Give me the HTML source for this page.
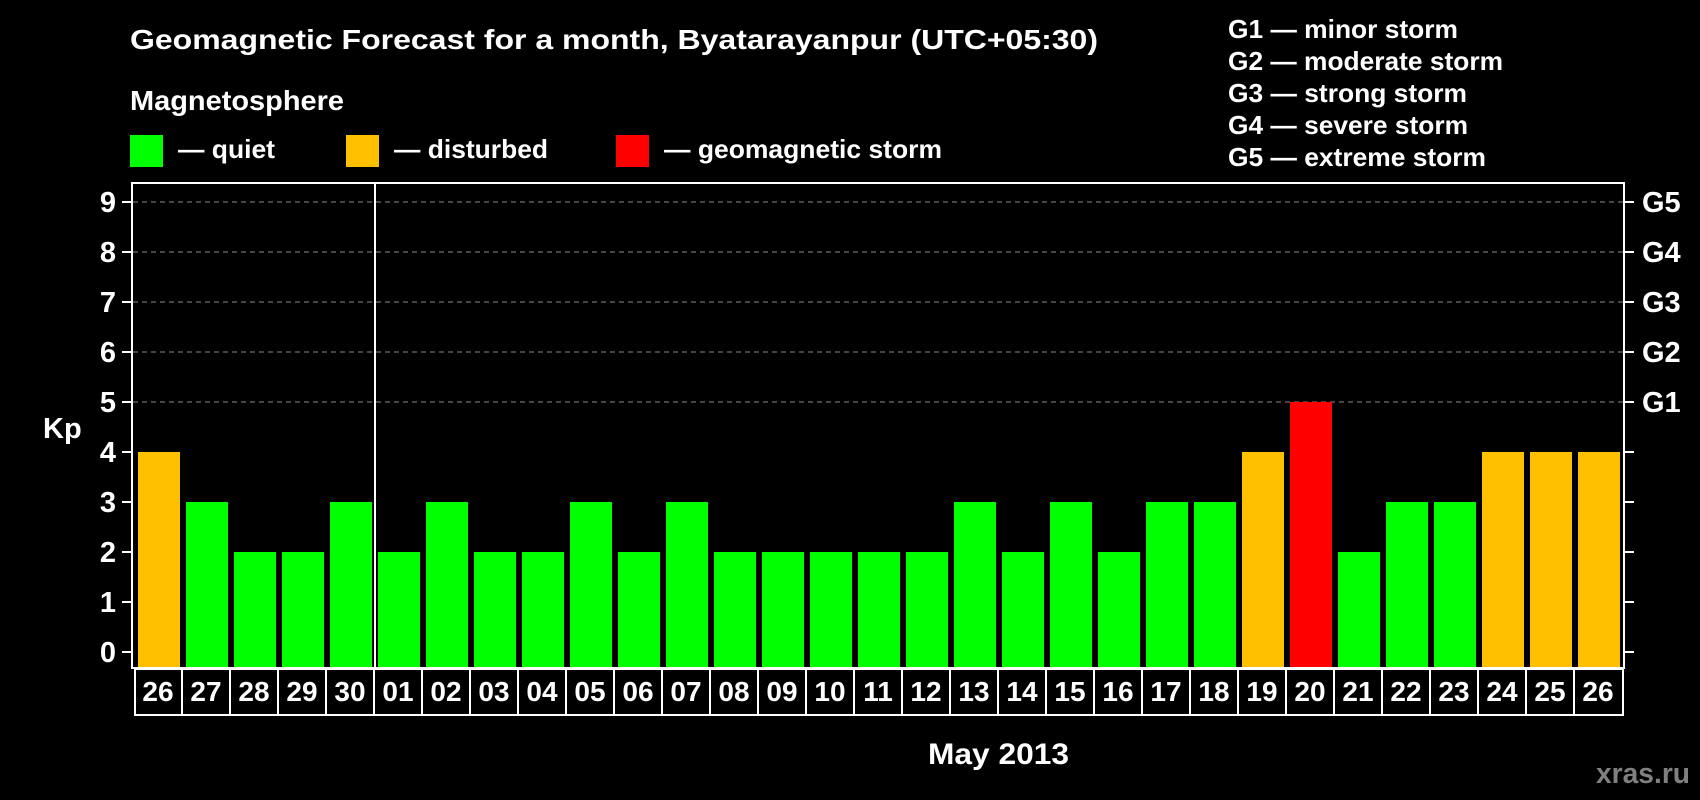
<!DOCTYPE html>
<html><head><meta charset="utf-8"><style>html,body{margin:0;padding:0;background:#000;}svg{display:block}</style></head><body>
<svg width="1700" height="800" xmlns="http://www.w3.org/2000/svg" font-family="Liberation Sans, Arial, sans-serif" font-weight="bold" fill="#fff">
<rect width="1700" height="800" fill="#000"/>
<text x="130" y="49" font-size="28" textLength="968" lengthAdjust="spacingAndGlyphs">Geomagnetic Forecast for a month, Byatarayanpur (UTC+05:30)</text>
<text x="130" y="110" font-size="28" textLength="214" lengthAdjust="spacingAndGlyphs">Magnetosphere</text>
<rect x="130" y="135" width="33" height="32" fill="#00ff00"/>
<text x="178" y="158" font-size="26" textLength="97" lengthAdjust="spacingAndGlyphs">— quiet</text>
<rect x="346" y="135" width="33" height="32" fill="#ffc000"/>
<text x="394" y="158" font-size="26" textLength="154" lengthAdjust="spacingAndGlyphs">— disturbed</text>
<rect x="616" y="135" width="33" height="32" fill="#ff0000"/>
<text x="664" y="158" font-size="26" textLength="278" lengthAdjust="spacingAndGlyphs">— geomagnetic storm</text>
<g font-size="26">
<text x="1228" y="38" textLength="230" lengthAdjust="spacingAndGlyphs">G1 — minor storm</text>
<text x="1228" y="70" textLength="275" lengthAdjust="spacingAndGlyphs">G2 — moderate storm</text>
<text x="1228" y="102" textLength="239" lengthAdjust="spacingAndGlyphs">G3 — strong storm</text>
<text x="1228" y="134" textLength="240" lengthAdjust="spacingAndGlyphs">G4 — severe storm</text>
<text x="1228" y="166" textLength="258" lengthAdjust="spacingAndGlyphs">G5 — extreme storm</text>
</g>
<g stroke="#888" stroke-width="1" stroke-dasharray="5,4">
<line x1="133" y1="202" x2="1623" y2="202"/><line x1="133" y1="252" x2="1623" y2="252"/>
<line x1="133" y1="302" x2="1623" y2="302"/><line x1="133" y1="352" x2="1623" y2="352"/>
<line x1="133" y1="402" x2="1623" y2="402"/>
</g>
<g>
<rect x="138" y="452" width="42" height="216" fill="#ffc000"/>
<rect x="186" y="502" width="42" height="166" fill="#00ff00"/>
<rect x="234" y="552" width="42" height="116" fill="#00ff00"/>
<rect x="282" y="552" width="42" height="116" fill="#00ff00"/>
<rect x="330" y="502" width="42" height="166" fill="#00ff00"/>
<rect x="378" y="552" width="42" height="116" fill="#00ff00"/>
<rect x="426" y="502" width="42" height="166" fill="#00ff00"/>
<rect x="474" y="552" width="42" height="116" fill="#00ff00"/>
<rect x="522" y="552" width="42" height="116" fill="#00ff00"/>
<rect x="570" y="502" width="42" height="166" fill="#00ff00"/>
<rect x="618" y="552" width="42" height="116" fill="#00ff00"/>
<rect x="666" y="502" width="42" height="166" fill="#00ff00"/>
<rect x="714" y="552" width="42" height="116" fill="#00ff00"/>
<rect x="762" y="552" width="42" height="116" fill="#00ff00"/>
<rect x="810" y="552" width="42" height="116" fill="#00ff00"/>
<rect x="858" y="552" width="42" height="116" fill="#00ff00"/>
<rect x="906" y="552" width="42" height="116" fill="#00ff00"/>
<rect x="954" y="502" width="42" height="166" fill="#00ff00"/>
<rect x="1002" y="552" width="42" height="116" fill="#00ff00"/>
<rect x="1050" y="502" width="42" height="166" fill="#00ff00"/>
<rect x="1098" y="552" width="42" height="116" fill="#00ff00"/>
<rect x="1146" y="502" width="42" height="166" fill="#00ff00"/>
<rect x="1194" y="502" width="42" height="166" fill="#00ff00"/>
<rect x="1242" y="452" width="42" height="216" fill="#ffc000"/>
<rect x="1290" y="402" width="42" height="266" fill="#ff0000"/>
<rect x="1338" y="552" width="42" height="116" fill="#00ff00"/>
<rect x="1386" y="502" width="42" height="166" fill="#00ff00"/>
<rect x="1434" y="502" width="42" height="166" fill="#00ff00"/>
<rect x="1482" y="452" width="42" height="216" fill="#ffc000"/>
<rect x="1530" y="452" width="42" height="216" fill="#ffc000"/>
<rect x="1578" y="452" width="42" height="216" fill="#ffc000"/>
</g>
<rect x="132" y="183" width="1492" height="485" fill="none" stroke="#fff" stroke-width="2"/>
<line x1="375" y1="182" x2="375" y2="668" stroke="#fff" stroke-width="2"/>
<g stroke="#fff" stroke-width="2">
<path d="M122 202H131M122 252H131M122 302H131M122 352H131M122 402H131M122 452H131M122 502H131M122 552H131M122 602H131M122 652H131"/>
<path d="M1625 202H1634M1625 252H1634M1625 302H1634M1625 352H1634M1625 402H1634M1625 452H1634M1625 502H1634M1625 552H1634M1625 602H1634M1625 652H1634"/>
</g>
<g font-size="29" text-anchor="end">
<text x="116" y="212">9</text><text x="116" y="262">8</text><text x="116" y="312">7</text><text x="116" y="362">6</text><text x="116" y="412">5</text><text x="116" y="462">4</text><text x="116" y="512">3</text><text x="116" y="562">2</text><text x="116" y="612">1</text><text x="116" y="662">0</text>
</g>
<text x="43" y="438" font-size="29">Kp</text>
<g font-size="29">
<text x="1642" y="212">G5</text><text x="1642" y="262">G4</text><text x="1642" y="312">G3</text><text x="1642" y="362">G2</text><text x="1642" y="412">G1</text>
</g>
<rect x="135" y="669" width="1488" height="46" fill="none" stroke="#fff" stroke-width="2"/>
<path stroke="#fff" stroke-width="2" d="M182 669V715M230 669V715M278 669V715M326 669V715M374 669V715M422 669V715M470 669V715M518 669V715M566 669V715M614 669V715M662 669V715M710 669V715M758 669V715M806 669V715M854 669V715M902 669V715M950 669V715M998 669V715M1046 669V715M1094 669V715M1142 669V715M1190 669V715M1238 669V715M1286 669V715M1334 669V715M1382 669V715M1430 669V715M1478 669V715M1526 669V715M1574 669V715"/>
<g font-size="28" text-anchor="middle">
<text x="158" y="701">26</text><text x="206" y="701">27</text><text x="254" y="701">28</text><text x="302" y="701">29</text><text x="350" y="701">30</text>
<text x="398" y="701">01</text><text x="446" y="701">02</text><text x="494" y="701">03</text><text x="542" y="701">04</text><text x="590" y="701">05</text>
<text x="638" y="701">06</text><text x="686" y="701">07</text><text x="734" y="701">08</text><text x="782" y="701">09</text><text x="830" y="701">10</text>
<text x="878" y="701">11</text><text x="926" y="701">12</text><text x="974" y="701">13</text><text x="1022" y="701">14</text><text x="1070" y="701">15</text>
<text x="1118" y="701">16</text><text x="1166" y="701">17</text><text x="1214" y="701">18</text><text x="1262" y="701">19</text><text x="1310" y="701">20</text>
<text x="1358" y="701">21</text><text x="1406" y="701">22</text><text x="1454" y="701">23</text><text x="1502" y="701">24</text><text x="1550" y="701">25</text>
<text x="1598" y="701">26</text>
</g>
<text x="928" y="764" font-size="30" textLength="141" lengthAdjust="spacingAndGlyphs">May 2013</text>
<text x="1596" y="783" font-size="29" fill="#808080" textLength="94" lengthAdjust="spacingAndGlyphs">xras.ru</text>
</svg>
</body></html>
